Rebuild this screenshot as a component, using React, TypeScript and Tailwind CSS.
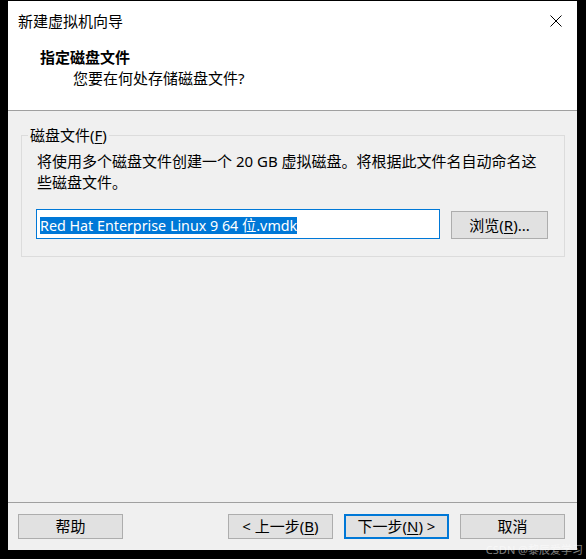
import React from 'react';

const cjk = '"Segoe UI", "Noto Sans", "Noto Sans CJK SC", sans-serif';

function Btn({ children, primary }: { children: React.ReactNode; primary?: boolean }) {
  return (
    <button
      className={`w-[105px] h-[25px] flex items-center justify-center bg-[#e1e1e1] text-[15px] leading-none text-black ${
        primary ? 'border-2 border-[#0078d7]' : 'border border-[#adadad]'
      }`}
    >
      {children}
    </button>
  );
}

export default function App() {
  return (
    <div className="relative w-[586px] h-[559px] bg-black pt-px pl-2" style={{ fontFamily: cjk }}>
      <div className="w-[569px] h-[549px] flex flex-col bg-[#f0f0f0] text-black">
        {/* 头部 */}
        <div className="h-[110px] bg-white border-b border-[#a0a0a0]">
          <div className="h-[40px] flex items-center justify-between pl-[10px] pr-[15px]">
            <span className="text-[15px]">新建虚拟机向导</span>
            <svg width="12" height="12" viewBox="0 0 12 12" className="mb-px">
              <path d="M0.5 0.5 L11.5 11.5 M11.5 0.5 L0.5 11.5" stroke="#000" strokeWidth="1" />
            </svg>
          </div>
          <div className="mt-[6px] pl-[32px] text-[15px] leading-[20px] font-bold">指定磁盘文件</div>
          <div className="mt-px pl-[65px] text-[15px] leading-[20px]">您要在何处存储磁盘文件?</div>
        </div>

        {/* 内容 */}
        <div className="flex-1">
          <div className="relative mt-[24px] ml-[13px] mr-[12px] h-[122px] border border-[#dcdcdc]">
            <span className="absolute left-[6px] -top-[11px] px-[2px] bg-[#f0f0f0] text-[15px] leading-[20px]">
              磁盘文件(<span className="underline underline-offset-2">F</span>)
            </span>
            <div className="pt-[15px] pl-[15px] text-[15px] leading-[21px] whitespace-nowrap">
              将使用多个磁盘文件创建一个 20 GB 虚拟磁盘。将根据此文件名自动命名这
              <br />
              些磁盘文件。
            </div>
            <div className="mt-[16px] pl-[14px] flex items-end gap-[11px]">
              <div className="w-[404px] h-[30px] bg-white border border-[#0078d7] pl-[3px] pt-[3px]">
                <span className="inline-block bg-[#0078d7] text-white text-[14.3px] leading-[17px] whitespace-nowrap">
                  Red Hat Enterprise Linux 9 64 位.vmdk
                </span>
              </div>
              <button className="w-[97px] h-[28px] bg-[#e1e1e1] border border-[#adadad] text-[15px] leading-none flex items-center justify-center">
                浏览(<span className="underline underline-offset-2">R</span>)...
              </button>
            </div>
          </div>
        </div>

        {/* 底部按钮 */}
        <div className="h-[48px] border-t border-[#a0a0a0] pt-[11px] pl-[10px] pr-[12px] flex items-start">
          <Btn>帮助</Btn>
          <div className="ml-auto flex gap-[11px]">
            <Btn>
              &lt; 上一步(<span className="underline underline-offset-2">B</span>)
            </Btn>
            <Btn primary>
              下一步(<span className="underline underline-offset-2">N</span>) &gt;
            </Btn>
            <Btn>取消</Btn>
          </div>
        </div>
      </div>
      <span className="absolute right-[3px] bottom-[4px] text-[11px] leading-none text-white/50">CSDN @黎辰爱学习</span>
    </div>
  );
}
